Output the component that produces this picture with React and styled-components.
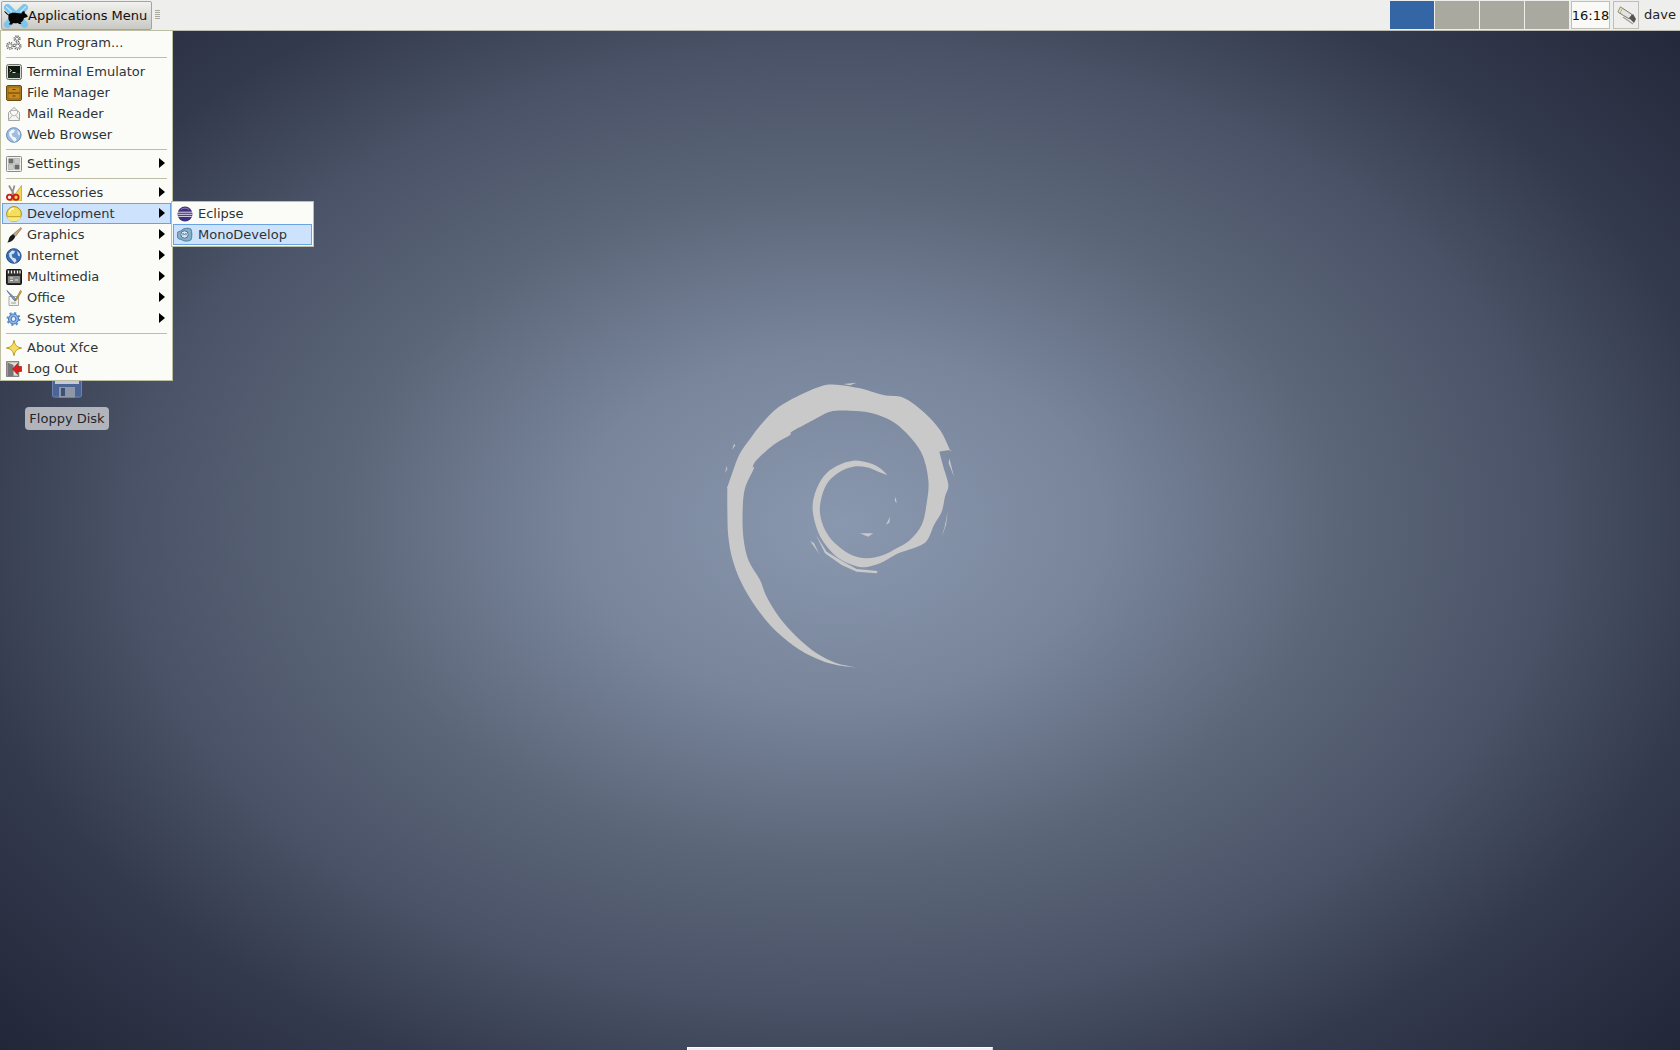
import React from "react";
import styled, { createGlobalStyle } from "styled-components";

const Global = createGlobalStyle`
  html, body { margin: 0; padding: 0; height: 100%; overflow: hidden; }
  #root { height: 100%; }
`;

const Screen = styled.div`
  position: relative;
  width: 1680px;
  height: 1050px;
  display: flex;
  flex-direction: column;
  overflow: hidden;
  font-family: "DejaVu Sans", sans-serif;
  font-size: 13px;
  color: #2e3436;
  background: radial-gradient(1188px 800px at 840px 525px, #8a98af 0%, #78859b 22%, #5c6679 42%, #495266 60%, #343a4d 75%, #1e2335 100%);
`;

const Panel = styled.header`
  height: 30px;
  flex: none;
  display: flex;
  align-items: stretch;
  background: #eeeeec;
  border-bottom: 1px solid #bdbdb5;
  color: #000;
`;

const AppButton = styled.button`
  width: 151px;
  height: 29px;
  margin: 1px 0 0 1px;
  padding: 0 0 0 2px;
  display: flex;
  align-items: center;
  box-sizing: border-box;
  font: inherit;
  white-space: nowrap;
  color: #111;
  border: 1px solid #a5a59b;
  border-radius: 2px;
  background: linear-gradient(#f1f1ef, #c9c9c4);
`;

const Handle = styled.div`
  width: 5px;
  height: 9px;
  margin: 10px 0 0 3px;
  background: repeating-linear-gradient(#a8a8a0 0 1px, transparent 1px 2px);
`;

const Spacer = styled.div`
  flex: 1;
`;

const Pager = styled.div`
  display: flex;
  gap: 1px;
  margin: 1px 2px 0 0;
`;

const Desk = styled.div`
  width: ${(p) => p.$w}px;
  height: 28px;
  background: ${(p) => (p.$active ? "#3465a4" : "#a9a99f")};
`;

const Clock = styled.div`
  width: 39px;
  height: 28px;
  margin-top: 1px;
  box-sizing: border-box;
  display: flex;
  align-items: center;
  justify-content: center;
  border: 1px solid #bfbfb6;
  background: #f9f9f6;
  color: #111;
`;

const Tray = styled.div`
  width: 26px;
  height: 28px;
  margin: 1px 0 0 3px;
  box-sizing: border-box;
  display: flex;
  align-items: center;
  justify-content: center;
  border: 1px solid #bfbfb6;
`;

const User = styled.div`
  margin-left: 5px;
  width: 36px;
  line-height: 30px;
  color: #222;
`;

const Stage = styled.main`
  flex: 1;
  display: flex;
  align-items: center;
  justify-content: center;
  padding-bottom: 28px;
`;

const Dock = styled.div`
  flex: none;
  align-self: center;
  width: 306px;
  height: 3px;
  box-sizing: border-box;
  border-top: 1px solid #fbfbfa;
  border-left: 1px solid #fff;
  border-right: 1px solid #ccc;
  background: #eeeeec;
`;

const Menu = styled.nav`
  position: absolute;
  left: ${(p) => p.$x}px;
  top: ${(p) => p.$y}px;
  width: ${(p) => p.$w}px;
  box-sizing: border-box;
  padding: 1px;
  background: #fbfcf7;
  border: 1px solid #bdbea3;
`;

const Row = styled.div`
  height: 21px;
  box-sizing: border-box;
  display: flex;
  align-items: center;
  padding-left: 3px;
  gap: 5px;
  color: #2e3436;
  border: 1px solid ${(p) => (p.$on ? "#6aa3e2" : "transparent")};
  background: ${(p) => (p.$on ? "#cde2fc" : "transparent")};
`;

const RowIcon = styled.svg`
  width: 16px;
  height: 16px;
  flex: none;
`;

const Label = styled.span`
  flex: 1;
  white-space: nowrap;
`;

const Arrow = styled.i`
  width: 0;
  height: 0;
  margin: 0 5px 1px 0;
  border-left: 6px solid #000;
  border-top: 5.5px solid transparent;
  border-bottom: 5.5px solid transparent;
`;

const Sep = styled.div`
  height: 8px;
  display: flex;
  align-items: center;
  padding: 0 4px;
  &::after {
    content: "";
    flex: 1;
    height: 1px;
    background: #bdbea3;
  }
`;

const DesktopIcon = styled.div`
  position: absolute;
  left: 25px;
  top: 380px;
  width: 84px;
  display: flex;
  flex-direction: column;
  align-items: center;
  gap: 9px;
`;

const IconLabel = styled.div`
  width: 84px;
  height: 23px;
  display: flex;
  align-items: center;
  justify-content: center;
  border-radius: 4px;
  background: #b2b4bc;
  color: #22262a;
`;

const I = ({ children }) => <RowIcon viewBox="0 0 16 16">{children}</RowIcon>;

const Gear = ({ x, y, r }) => (
  <g>
    <circle cx={x} cy={y} r={r + 0.3} fill="#f7f7f5" stroke="#6d6d69" strokeWidth="1.4" strokeDasharray="1.3 1" />
    <circle cx={x} cy={y} r={r - 1} fill="#fff" stroke="#77777a" strokeWidth=".9" />
  </g>
);
const RunIcon = () => (
  <I>
    <Gear x={11} y={3.8} r={2.6} />
    <Gear x={4} y={10.8} r={3} />
    <Gear x={11.6} y={11.2} r={3} />
  </I>
);
const TerminalIcon = () => (
  <I>
    <rect x=".5" y=".5" width="15" height="15" rx="2" fill="#d6d8d3" stroke="#6f726d" />
    <rect x="2" y="2" width="12" height="12" fill="#10170f" />
    <rect x="2" y="9" width="12" height="5" fill="#1e3020" />
    <path d="M3.5 5l2 1.5-2 1.5M6.500 8.500h3" stroke="#d8e4d4" fill="none" strokeWidth="1" />
  </I>
);
const FileIcon = () => (
  <I>
    <rect x=".5" y=".5" width="15" height="15" rx="1.5" fill="#b58a35" stroke="#6d4c12" />
    <rect x="2" y="2" width="12" height="5.5" fill="#c98a1c" stroke="#7c5512" strokeWidth=".7" />
    <rect x="2" y="8.5" width="12" height="5.5" fill="#c98a1c" stroke="#7c5512" strokeWidth=".7" />
    <path d="M6.500 4.500h3M6.500 11h3" stroke="#5b3f0c" />
  </I>
);
const MailIcon = () => (
  <I>
    <path d="M2.500 6.500l5.500-5 5.500 5v8h-11z" fill="#f5f5f3" stroke="#a4a4a0" />
    <path d="M4.500 7.500V4.500h7v3L8 10zM2.500 14l4-5M13.500 14l-4-5" fill="#fafafa" stroke="#aeaeaa" strokeWidth=".9" />
  </I>
);
const Globe = ({ dark }) => (
  <I>
    <circle cx="7.800" cy="8" r="7.300" fill={dark ? "#3b6fb5" : "#9fbde0"} stroke={dark ? "#26508c" : "#6b8fbe"} />
    <path d="M3 5.500l3-3 3 .5-1 2.500-2.500 1 1 3 3 1 1 2.500-2 2-2-2.500L3.500 9z" fill={dark ? "#d6e2f2" : "#f3f6fb"} />
    <path d="M11 3l2.500 2.500.6 3-2.100-1z" fill={dark ? "#d6e2f2" : "#e6eef8"} />
  </I>
);
const SettingsIcon = () => (
  <I>
    <rect x=".5" y=".5" width="15" height="15" rx="1" fill="#f2f2ef" stroke="#8b8b86" />
    <rect x="2.500" y="2.500" width="5" height="5" fill="#6a6c6a" />
    <rect x="8.500" y="2.500" width="5" height="5" fill="#c9cbc8" stroke="#9a9a96" strokeWidth=".5" />
    <rect x="2.500" y="8.500" width="5" height="5" fill="#c9cbc8" stroke="#9a9a96" strokeWidth=".5" />
    <rect x="8.500" y="8.500" width="5" height="5" fill="#6a6c6a" />
  </I>
);
const AccessoriesIcon = () => (
  <I>
    <path d="M15.500.5V16H4z" fill="#f1d75c" stroke="#b89f2a" strokeWidth=".7" />
    <path d="M3 .5l5 9M8.500.5L6 9.500" stroke="#8f8f8a" strokeWidth="1.700" />
    <circle cx="3.500" cy="12.200" r="2.600" fill="none" stroke="#cc1c14" strokeWidth="1.800" />
    <circle cx="10" cy="12.200" r="2.600" fill="none" stroke="#cc1c14" strokeWidth="1.800" />
    <path d="M5 10.500h4" stroke="#cc1c14" strokeWidth="1.600" />
  </I>
);
const HatIcon = () => (
  <I>
    <circle cx="8" cy="8" r="7.400" fill="#f5de5a" stroke="#a88f1a" />
    <path d="M2 10.500h12" stroke="#c9ad2a" strokeWidth="1" />
    <path d="M1.200 10.800c2 2 11.600 2 13.600 0-.6 3-3.400 4.600-6.800 4.600s-6.200-1.600-6.800-4.600z" fill="#f8ea88" />
    <path d="M3.300 6.500c.7-2.500 2.700-4 4.700-4" stroke="#fffbd8" fill="none" strokeWidth="1.400" />
  </I>
);
const BrushIcon = () => (
  <I>
    <path d="M15 .6l.7.8-6 7.600-2.400-2.100z" fill="#c9a781" stroke="#7c5e3c" strokeWidth=".6" />
    <path d="M7 7l2.300 2.200C8.600 12 6 15 1.200 15.600 3 13.800 2.400 11 4.200 9.200z" fill="#1b1b1b" />
  </I>
);
const ClapIcon = () => (
  <I>
    <rect x=".5" y=".5" width="15" height="15" rx="1" fill="#2d2d2b" stroke="#151515" />
    <path d="M2.500 1.500v3M5.500 1.500v3M8.500 1.500v3M11.500 1.500v3M14 1.500v3" stroke="#eee" strokeWidth="1.300" />
    <rect x="2" y="7" width="12" height="7" fill="#8b8b86" />
    <path d="M4 9h3M9 11h3M4 11.500h3" stroke="#e2e2de" />
  </I>
);
const OfficeIcon = () => (
  <I>
    <path d="M3 6.500h9.500v9H3z" fill="#f4f4f0" stroke="#a9a9a3" />
    <path d="M.8.5l7 9.500 2 .8-.4-2.300z" fill="#7fa0cf" stroke="#41648f" strokeWidth=".7" />
    <path d="M14.500.5l-5 9-1 1.600 2.400-1.400 4.600-8.200z" fill="#d4b35a" stroke="#8a6d22" strokeWidth=".7" />
    <path d="M5 13h5" stroke="#9b9b96" />
  </I>
);
const SystemIcon = () => (
  <I>
    <circle cx="7.500" cy="8" r="5" fill="#8fb6e6" stroke="#3b6fb5" />
    <circle cx="7.500" cy="8" r="6" fill="none" stroke="#5a8ccc" strokeWidth="2" strokeDasharray="2.100 2.600" />
    <circle cx="7.500" cy="8" r="2.400" fill="#eaf1fb" stroke="#3b6fb5" />
  </I>
);
const StarIcon = () => (
  <I>
    <path d="M8 .4C8.800 5 11 7.200 15.600 8 11 8.800 8.800 11 8 15.600 7.200 11 5 8.800.4 8 5 7.200 7.200 5 8 .4z" fill="#f4dd62" stroke="#b59a1f" />
  </I>
);
const LogoutIcon = () => (
  <I>
    <rect x=".7" y=".7" width="12" height="14.600" fill="#dcdcd8" stroke="#6a6a66" />
    <path d="M1.500 1.500l6 2.500v11h-6z" fill="#77777a" />
    <path d="M15.600 5.500v5h-4v3L6.500 8l5.100-5.500v3z" fill="#dd1f1c" stroke="#8f0f0c" strokeWidth=".6" />
  </I>
);
const EclipseIcon = () => (
  <I>
    <circle cx="8" cy="8" r="7.500" fill="#3f2f7c" />
    <path d="M.8 6.200h14.400M.7 8.300h14.600M1.200 10.400h13.600" stroke="#f0ecf6" strokeWidth=".9" />
    <path d="M4 3.500c2-1.800 6-1.800 8 0" stroke="#8c7cb8" fill="none" />
  </I>
);
const MonoIcon = () => (
  <I>
    <path d="M.8 5c1.500-1 2-.5 3-1 1.800-2.500 7-3.500 10-2 1.400 3 1.400 8.500 0 11-3 1.600-7 1.500-9.500-.5-1.500-.2-2.800-.5-3.500-1.500-.5-2-.5-4 0-6z" fill="#86aecb" stroke="#4f7b9c" />
    <circle cx="7.500" cy="7.500" r="3.700" fill="#dce9f2" stroke="#4a7696" />
    <path d="M6 8.500V6.200l1.500 1.500 1.500-1.500v2.300" fill="none" stroke="#4a7696" strokeWidth=".9" />
  </I>
);

const XfceMouse = () => (
  <svg width="24" height="24" viewBox="0 0 24 24" style={{ flex: "none" }}>
    <path d="M3.500 3.500L20.500 20.500M20.500 3.500L3.500 20.500" stroke="#7cc5ec" strokeWidth="7" strokeLinecap="round" />
    <path d="M2 2.500L8 8M22 2.500L16 8" stroke="#c4e6f6" strokeWidth="1.200" />
    <path d="M0 7c2 .5 3 2.500 4.500 3.500 1.500-1.500 5-2 8-1.500 2 .3 3.500.5 5 .5.3-1.200 1.500-2.500 3-2.500 0 1 .3 2 .6 2.500 1 .5 2.400 2 2.900 3-1.500 1-2.500 1-4 1.500-.5 2-1.500 3.500-3.500 4.500l1 1.500H15l-1-1c-1.800.3-3.500.3-5 0l-1 1.500H5l1.200-2.500C4.500 16.500 4 14 4.500 11.500 2.500 10.500 1 8.500 0 7z" fill="#050505" />
  </svg>
);

const UsbIcon = () => (
  <svg width="22" height="22" viewBox="0 0 22 22">
    <path d="M3 8l2.500-5 5.500 3.500 6 4-2.500 4.500-6-3.500z" fill="#e3e3df" stroke="#77776f" />
    <path d="M3 8l2.500-5 2 1.200-2.500 5z" fill="#f2e8ac" stroke="#8a8a7e" strokeWidth=".6" />
    <path d="M14 14l4-4 3 5-2 4z" fill="#55554f" />
    <path d="M8 13l10 7" stroke="#a0a098" strokeWidth="1.400" />
  </svg>
);

const FloppyIcon = () => (
  <svg width="30" height="18" viewBox="0 0 30 18" style={{ display: "block" }}>
    <path d="M0 0h30v15a2.500 2.500 0 0 1-2.500 2.500h-25A2.500 2.500 0 0 1 0 15z" fill="#4a6596" />
    <path d="M.5 0v15a2 2 0 0 0 2 2h25a2 2 0 0 0 2-2V0" fill="none" stroke="#6b83ad" />
    <rect x="3" y="0" width="24" height="4" fill="#c5cad4" />
    <rect x="7" y="7" width="16" height="10.500" fill="#9098a8" />
    <rect x="9" y="8" width="4" height="8" fill="#3d5078" />
  </svg>
);

/* swirl outline, traced in a 780x930 box; a doubled point keeps a sharp tip */
const swirl = [
  [437,892],[437,892],[380,885],[330,870],[270,840],[200,785],[140,715],[95,640],[68,570],[55,500],[52,420],[52,352],[52,352],
  [70,300],[90,250],[125,200],[165,150],[205,112],[260,80],[335,48],[380,44],[450,55],[520,75],[580,83],
  [640,125],[690,180],[720,240],[720,240],[688,245],[688,245],[700,290],[715,345],[705,380],[695,425],[672,465],[648,515],[600,538],
  [560,552],[510,580],[460,592],[420,582],[380,560],[345,522],[322,480],[308,420],[315,370],[340,320],[380,288],
  [430,272],[480,280],[510,295],[532,315],[532,315],[505,305],[470,292],[430,290],[390,305],[355,335],[335,380],[330,430],
  [345,480],[375,520],[420,553],[470,565],[520,555],[560,535],[600,510],[635,465],[650,400],[655,330],[635,250],
  [590,190],[540,150],[480,128],[420,122],[360,125],[310,150],[300,155],[245,185],[240,195],[190,225],[140,270],[128,292],[132,295],[105,355],
  [98,420],[100,500],[115,570],[150,630],[170,680],[210,745],[260,800],[320,850],[380,880],
];
const curve = (pts) => {
  const n = pts.length;
  let d = `M${pts[0][0]} ${pts[0][1]}`;
  for (let i = 0; i < n; i++) {
    const p0 = pts[(i - 1 + n) % n];
    const p1 = pts[i];
    const p2 = pts[(i + 1) % n];
    const p3 = pts[(i + 2) % n];
    const c1x = p1[0] + (p2[0] - p0[0]) / 6;
    const c1y = p1[1] + (p2[1] - p0[1]) / 6;
    const c2x = p2[0] - (p3[0] - p1[0]) / 6;
    const c2y = p2[1] - (p3[1] - p1[1]) / 6;
    d += `C${c1x.toFixed(1)} ${c1y.toFixed(1)} ${c2x.toFixed(1)} ${c2y.toFixed(1)} ${p2[0]} ${p2[1]}`;
  }
  return d + "Z";
};
const swirlPath = curve(swirl);

const Swirl = () => (
  <svg width="260" height="310" viewBox="0 0 780 930" style={{ display: "block" }}>
    <path d={swirlPath} fill="#c9c9c9" />
    <path
      d="M72 222l-6 18 10-14zM50 288l-5 22 7-14zM557 380l-3 12 6 8zM540 440l-12 24 10-6zM450 490l40 0-16 10zM300 512l12 8 16 32zM318 495l32 50 50 30 40 22 63 6-3 7-60-5-45-20-50-35zM713 425l-5 40-14 38 10-33zM718 265l14 55-16-40zM400 42l40-4-20 8z"
      fill="#c9c9c9"
    />
  </svg>
);

const MENU = [
  { t: "Run Program...", i: RunIcon },
  "-",
  { t: "Terminal Emulator", i: TerminalIcon },
  { t: "File Manager", i: FileIcon },
  { t: "Mail Reader", i: MailIcon },
  { t: "Web Browser", i: () => <Globe /> },
  "-",
  { t: "Settings", i: SettingsIcon, sub: 1 },
  "-",
  { t: "Accessories", i: AccessoriesIcon, sub: 1 },
  { t: "Development", i: HatIcon, sub: 1, on: 1 },
  { t: "Graphics", i: BrushIcon, sub: 1 },
  { t: "Internet", i: () => <Globe dark />, sub: 1 },
  { t: "Multimedia", i: ClapIcon, sub: 1 },
  { t: "Office", i: OfficeIcon, sub: 1 },
  { t: "System", i: SystemIcon, sub: 1 },
  "-",
  { t: "About Xfce", i: StarIcon },
  { t: "Log Out", i: LogoutIcon },
];

const Item = ({ t, i: Icon, sub, on }) => (
  <Row $on={!!on}>
    <Icon />
    <Label>{t}</Label>
    {sub ? <Arrow /> : null}
  </Row>
);

export default function App() {
  return (
    <Screen>
      <Global />
      <Panel>
        <AppButton>
          <XfceMouse />
          Applications Menu
        </AppButton>
        <Handle />
        <Spacer />
        <Pager>
          <Desk $w={44} $active />
          <Desk $w={44} />
          <Desk $w={44} />
          <Desk $w={44} />
        </Pager>
        <Clock>16:18</Clock>
        <Tray>
          <UsbIcon />
        </Tray>
        <User>dave</User>
      </Panel>
      <Stage>
        <Swirl />
      </Stage>
      <Dock />
      <DesktopIcon>
        <FloppyIcon />
        <IconLabel>Floppy Disk</IconLabel>
      </DesktopIcon>
      <Menu $x={0} $y={30} $w={173}>
        {MENU.map((m, k) => (m === "-" ? <Sep key={k} /> : <Item key={k} {...m} />))}
      </Menu>
      <Menu $x={171} $y={201} $w={143}>
        <Item t="Eclipse" i={EclipseIcon} />
        <Item t="MonoDevelop" i={MonoIcon} on />
      </Menu>
    </Screen>
  );
}
